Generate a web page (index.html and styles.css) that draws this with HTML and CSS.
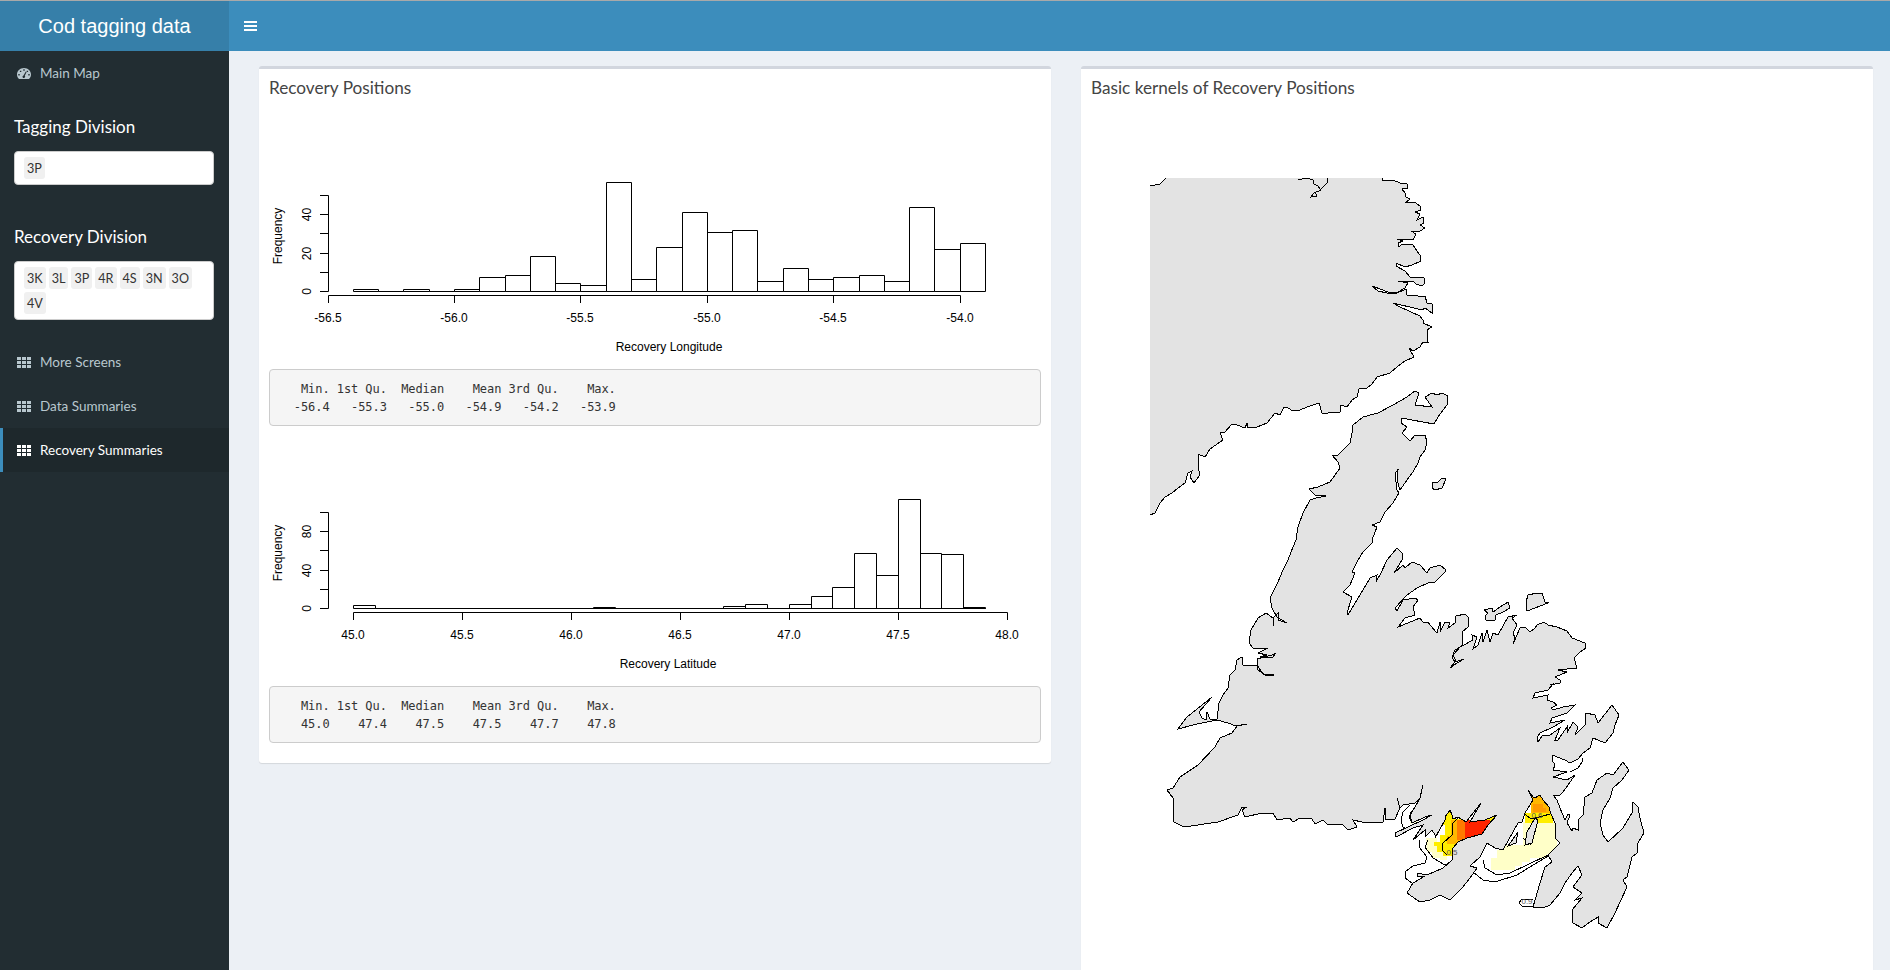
FILE: index.html
```html
<!DOCTYPE html>
<html lang="en">
<head>
    <meta charset="UTF-8">
    <title>Cod tagging data</title>
    <link rel="stylesheet" href="styles.css">
</head>
<body>

<header class="topbar">
    <div class="logo">Cod tagging data</div>
    <div class="navbar">
        <span class="toggle"><i></i><i></i><i></i></span>
    </div>
</header>

<div class="wrapper">
    <aside class="sidebar">
        <a class="menu-item">
            <svg class="icon" viewBox="0 0 14 11"><path fill-rule="evenodd" d="M2 11C.7 9.800 0 8.200 0 6.500 0 2.900 3.100 0 7 0s7 2.900 7 6.500c0 1.700-.7 3.300-2 4.500zM6.300 1.300v1.500h1.400V1.300zM2.900 2.700v1.400h1.400V2.700zM9.700 2.700v1.400h1.400V2.700zM1.300 6v1.400h1.400V6zM11.300 6v1.400h1.400V6zM8.800 3.600 6.500 7.400a1.300 1.300 0 1 0 1.300.4l1.800-3.900z"/></svg>
            <span>Main Map</span>
        </a>

        <div class="form-group">
            <label>Tagging Division</label>
            <div class="selectize">
                <span class="chip">3P</span>
            </div>
        </div>

        <div class="form-group">
            <label>Recovery Division</label>
            <div class="selectize">
                <span class="chip">3K</span>
                <span class="chip">3L</span>
                <span class="chip">3P</span>
                <span class="chip">4R</span>
                <span class="chip">4S</span>
                <span class="chip">3N</span>
                <span class="chip">3O</span>
                <span class="chip">4V</span>
            </div>
        </div>

        <a class="menu-item">
            <svg class="icon" viewBox="0 0 14 11"><path d="M0 0h4v3H0zM5 0h4v3H5zM10 0h4v3h-4zM0 4h4v3H0zM5 4h4v3H5zM10 4h4v3h-4zM0 8h4v3H0zM5 8h4v3H5zM10 8h4v3h-4z"/></svg>
            <span>More Screens</span>
        </a>
        <a class="menu-item">
            <svg class="icon" viewBox="0 0 14 11"><path d="M0 0h4v3H0zM5 0h4v3H5zM10 0h4v3h-4zM0 4h4v3H0zM5 4h4v3H5zM10 4h4v3h-4zM0 8h4v3H0zM5 8h4v3H5zM10 8h4v3h-4z"/></svg>
            <span>Data Summaries</span>
        </a>
        <a class="menu-item active">
            <svg class="icon" viewBox="0 0 14 11"><path d="M0 0h4v3H0zM5 0h4v3H5zM10 0h4v3h-4zM0 4h4v3H0zM5 4h4v3H5zM10 4h4v3h-4zM0 8h4v3H0zM5 8h4v3H5zM10 8h4v3h-4z"/></svg>
            <span>Recovery Summaries</span>
        </a>
    </aside>

    <main class="content">
        <section class="box box-short">
            <h3 class="box-title">Recovery Positions</h3>
            <div class="box-body">
                <svg class="plot" viewBox="269 119 772 250">
                    <path class="bars" d="M353.500 291.500V289.500H378.500V291.500ZM378.500 291.500H403.500ZM403.500 291.500V289.500H429.500V291.500ZM429.500 291.500H454.500ZM454.500 291.500V289.500H479.500V291.500ZM479.500 291.500V277.500H505.500V291.500ZM505.500 291.500V275.500H530.500V291.500ZM530.500 291.500V256.500H555.500V291.500ZM555.500 291.500V283.500H580.500V291.500ZM580.500 291.500V285.500H606.500V291.500ZM606.500 291.500V182.500H631.500V291.500ZM631.500 291.500V279.500H656.500V291.500ZM656.500 291.500V247.500H682.500V291.500ZM682.500 291.500V212.500H707.500V291.500ZM707.500 291.500V232.500H732.500V291.500ZM732.500 291.500V230.500H757.500V291.500ZM757.500 291.500V281.500H783.500V291.500ZM783.500 291.500V268.500H808.500V291.500ZM808.500 291.500V279.500H833.500V291.500ZM833.500 291.500V277.500H859.500V291.500ZM859.500 291.500V275.500H884.500V291.500ZM884.500 291.500V281.500H909.500V291.500ZM909.500 291.500V207.500H934.500V291.500ZM934.500 291.500V249.500H960.500V291.500ZM960.500 291.500V243.500H985.500V291.500Z"/>
                    <path class="axis" d="M328.500 195.500V291.500M320 195.500H328.500M320 214.500H328.500M320 233.500H328.500M320 253.500H328.500M320 272.500H328.500M320 291.500H328.500M328.500 295.500H960.500M328.500 295.500V303M454.500 295.500V303M580.500 295.500V303M707.500 295.500V303M833.500 295.500V303M960.500 295.500V303"/>
                    <text class="tick" x="328" y="322">-56.5</text>
                    <text class="tick" x="454" y="322">-56.0</text>
                    <text class="tick" x="580" y="322">-55.5</text>
                    <text class="tick" x="707" y="322">-55.0</text>
                    <text class="tick" x="833" y="322">-54.5</text>
                    <text class="tick" x="960" y="322">-54.0</text>
                    <text class="tick" transform="translate(311 291.500) rotate(-90)">0</text>
                    <text class="tick" transform="translate(311 253.500) rotate(-90)">20</text>
                    <text class="tick" transform="translate(311 214.500) rotate(-90)">40</text>
                    <text class="tick" transform="translate(282 236) rotate(-90)">Frequency</text>
                    <text class="tick" x="669" y="351">Recovery Longitude</text>
                </svg>
                <pre class="summary">   Min. 1st Qu.  Median    Mean 3rd Qu.    Max. 
  -56.4   -55.3   -55.0   -54.9   -54.2   -53.9 </pre>

                <svg class="plot" viewBox="269 436 772 250">
                    <path class="bars" d="M353.500 608.500V605.500H375.500V608.500ZM375.500 608.500H985.500ZM593.500 608.500V607.500H615.500V608.500ZM723.500 608.500V606.500H745.500V608.500ZM745.500 608.500V604.500H767.500V608.500ZM789.500 608.500V604.500H811.500V608.500ZM811.500 608.500V596.500H832.500V608.500ZM832.500 608.500V587.500H854.500V608.500ZM854.500 608.500V553.500H876.500V608.500ZM876.500 608.500V575.500H898.500V608.500ZM898.500 608.500V499.500H920.500V608.500ZM920.500 608.500V553.500H941.500V608.500ZM941.500 608.500V554.500H963.500V608.500ZM963.500 608.500V607.500H985.500V608.500Z"/>
                    <path class="axis" d="M328.500 512.500V608.500M320 512.500H328.500M320 531.500H328.500M320 550.500H328.500M320 570.500H328.500M320 589.500H328.500M320 608.500H328.500M353.500 612.500H1007.500M353.500 612.500V620M462.500 612.500V620M571.500 612.500V620M680.500 612.500V620M789.500 612.500V620M898.500 612.500V620M1007.500 612.500V620"/>
                    <text class="tick" x="353" y="639">45.0</text>
                    <text class="tick" x="462" y="639">45.5</text>
                    <text class="tick" x="571" y="639">46.0</text>
                    <text class="tick" x="680" y="639">46.5</text>
                    <text class="tick" x="789" y="639">47.0</text>
                    <text class="tick" x="898" y="639">47.5</text>
                    <text class="tick" x="1007" y="639">48.0</text>
                    <text class="tick" transform="translate(311 608.500) rotate(-90)">0</text>
                    <text class="tick" transform="translate(311 570.500) rotate(-90)">40</text>
                    <text class="tick" transform="translate(311 531.500) rotate(-90)">80</text>
                    <text class="tick" transform="translate(282 553) rotate(-90)">Frequency</text>
                    <text class="tick" x="668" y="668">Recovery Latitude</text>
                </svg>
                <pre class="summary">   Min. 1st Qu.  Median    Mean 3rd Qu.    Max. 
   45.0    47.4    47.5    47.5    47.7    47.8 </pre>
            </div>
        </section>

        <section class="box">
            <h3 class="box-title">Basic kernels of Recovery Positions</h3>
            <div class="box-body map-plot">
                <svg class="map" viewBox="1150 178 520 772">
                    <!-- kernel density, land is painted over it -->
                    <path class="k1" d="M1491 870H1515V866H1522V862H1530V858H1547V854H1557V822H1523V845H1503V850H1497V858H1491Z"/>
                    <path class="k1" d="M1426 838H1437V842H1447V860H1440V858H1432V852H1427Z"/>
                    <path class="k1" d="M1412 812L1416 808 1414 818 1418 822 1410 824Z"/>
                    <path class="k2" d="M1525 813H1553V823H1525Z"/>
                    <path class="k2" d="M1442 812H1453V819H1465V833L1458 842 1455 856H1443V852H1437V846H1434V842H1440V835H1445V825H1442Z"/>
                    <path class="k2" d="M1484 820L1500 812V822H1484Z"/>
                    <path class="k3" d="M1531 796H1548V800H1551V813H1531Z"/>
                    <path class="k4" d="M1533 804H1543V808H1546V812H1533Z"/>
                    <path class="k3" d="M1451 820H1460V844H1447V836H1451Z"/>
                    <path class="k5" d="M1457 820H1467V840H1457Z"/>
                    <path class="k6" d="M1465 820H1490V826H1486V840H1465Z"/>
                    <path class="contour" d="M1420 840L1419 847 1427 857 1425 863 1413 866 1405 872 1405 878 1412 883M1428 840L1425 847 1433 858 1445 865 1452 862M1458 818L1453 823 1452 835 1443 843 1442 850 1447 855M1410 805L1403 812 1401 820 1403 827 1410 830M1417 806L1411 812 1409 818 1413 823M1473 872L1483 880 1495 882 1517 875 1533 865 1550 855M1483 860L1485 868 1497 875 1510 873 1527 865 1548 855M1523 813L1530 818 1535 818 1543 816 1550 814M1533 907L1522 906 1519 903 1522 899 1533 900M1523 838L1531 845"/>

                    <path class="land" d="M1140 187L1150 186 1160 184 1166 178V170H1382V178L1382 180 1388 181 1393 180 1400 183 1407 184 1408 188 1402 189 1405 193 1406 197 1410 199 1405 203 1410 202 1416 203 1420 206 1421 210 1415 212 1420 214 1417 220 1423 217 1424 223 1420 225 1425 228 1420 231 1411 231 1416 234 1413 240 1397 239 1403 241 1398 243 1398 247 1403 244 1413 245 1417 251 1420 255 1421 261 1412 265 1405 267 1396 263 1396 266 1405 271 1410 277 1424 278 1425 283 1422 286 1416 284 1413 281 1398 281 1408 283 1405 288 1398 292 1390 293 1383 290 1372 286 1378 291 1387 293 1397 293 1406 289 1407 295 1418 296 1425 296 1427 303 1432 304 1432 313 1425 308 1422 310 1393 303 1400 307 1420 316 1423 320 1423 323 1432 327 1427 330 1428 342 1423 342 1420 347 1413 351 1409 348 1414 357 1405 361 1397 367 1390 373 1377 377 1372 384 1367 388 1359 389 1357 397 1352 400 1347 407 1341 405 1340 412 1328 413 1322 413 1319 403 1307 407 1300 410 1293 411 1288 408 1284 407 1280 415 1275 413 1267 423 1257 427 1248 428 1247 423 1245 428 1237 425 1232 424 1225 432 1220 433 1223 440 1210 449 1205 457 1198 454 1198 467 1200 475 1194 483 1190 477 1192 471 1188 473 1185 483 1178 488 1172 493 1165 497 1160 503 1155 513 1150 515 1140 515Z"/>
                    <path class="coast" d="M1298 180L1302 179 1307 178 1313 180 1314 184 1318 186 1321 190 1314 193 1311 197 1317 196 1315 192M1327 178L1327 183 1321 189"/>

                    <path class="land" d="M1415 391L1407 397 1393 405 1378 413 1363 417 1353 425 1352 433 1350 443 1343 450 1338 455 1332 455 1338 462 1340 468 1330 482 1318 487 1309 489 1315 495 1326 496 1316 498 1310 500 1303 513 1298 527 1296 540 1293 547 1288 560 1283 570 1278 582 1270 598 1272 608 1277 617 1287 623 1278 620 1278 613 1273 618 1274 626 1273 618 1266 613 1258 618 1251 630 1249 643 1253 648 1268 648 1258 653 1267 655 1260 657 1272 658 1276 653 1272 655 1257 659 1258 670 1267 676 1274 675 1263 674 1257 665 1243 665 1242 657 1237 660 1235 670 1230 675 1228 688 1223 695 1219 703 1217 719 1210 719 1207 712 1206 720 1202 718 1199 712 1212 697 1202 705 1187 717 1178 729 1197 724 1217 720 1228 723 1236 726 1247 724 1237 726 1232 733 1220 738 1215 747 1198 765 1180 777 1173 788 1167 790 1173 798 1174 822 1184 827 1218 822 1238 815 1242 807 1247 807 1242 810 1245 817 1262 813 1273 813 1277 820 1290 818 1293 822 1300 818 1312 819 1315 824 1323 820 1327 824 1343 825 1348 830 1357 827 1353 820 1362 822 1383 822 1385 808 1386 820 1395 819 1400 808 1397 798 1400 808 1403 805 1415 803 1420 798 1423 785 1420 798 1415 807 1410 815 1412 823 1425 817 1432 815 1423 820 1395 833 1396 837 1413 828 1423 825 1413 840 1425 830 1425 837 1432 830 1435 835 1435 838 1445 820 1445 817 1450 810 1452 815 1453 819 1458 817 1466 822 1481 803 1470 822 1485 820 1497 815 1488 825 1482 834 1467 838 1458 842 1453 848 1452 860 1443 868 1427 875 1417 873 1417 877 1425 876 1413 883 1407 893 1420 902 1430 900 1440 895 1450 900 1462 888 1470 878 1477 868 1470 866 1480 857 1487 843 1495 848 1503 850 1518 823 1522 822 1525 813 1533 800 1528 790 1533 797 1535 798 1540 795 1543 800 1549 807 1551 814 1555 823 1555 838 1560 843 1555 848 1548 855 1552 862 1545 867 1540 883 1533 907 1543 908 1550 905 1560 893 1565 883 1572 873 1578 866 1582 875 1573 887 1582 893 1575 900 1582 898 1572 910 1573 923 1582 928 1590 922 1598 917 1598 923 1607 928 1615 913 1627 887 1623 880 1627 877 1632 857 1637 853 1638 843 1644 833 1640 818 1638 807 1633 802 1632 813 1623 828 1608 842 1603 835 1600 823 1603 810 1610 798 1613 788 1622 780 1629 770 1623 762 1613 775 1607 773 1597 780 1592 793 1585 797 1583 815 1578 820 1578 830 1573 828 1572 831 1567 823 1570 815 1568 814 1565 820 1560 808 1557 800 1553 795 1560 795 1563 792 1568 785 1575 775 1567 780 1553 777 1567 772 1553 770 1555 765 1552 760 1552 755 1565 760 1570 763 1578 759 1583 753 1590 748 1593 738 1605 743 1613 733 1615 725 1619 715 1612 705 1598 723 1595 715 1586 713 1585 725 1575 735 1578 727 1573 722 1567 733 1567 727 1558 740 1555 740 1560 728 1550 735 1542 736 1538 742 1537 738 1540 733 1553 727 1565 720 1550 723 1552 718 1567 713 1575 705 1563 707 1553 710 1551 708 1557 705 1553 702 1547 700 1548 695 1533 698 1535 693 1548 690 1553 684 1550 685 1560 683 1560 680 1555 677 1567 672 1558 670 1577 668 1574 658 1580 652 1586 648 1585 643 1572 638 1567 631 1557 627 1548 625 1544 622 1537 625 1535 628 1530 632 1525 627 1520 628 1513 644 1515 638 1513 633 1517 625 1512 618 1517 615 1508 617 1498 635 1493 633 1490 642 1487 630 1483 642 1482 633 1478 645 1473 649 1477 637 1472 635 1473 640 1462 646 1455 650 1452 657 1455 662 1464 659 1457 663 1450 668 1456 661 1453 655 1462 645 1462 632 1468 627 1468 617 1465 614 1456 616 1455 623 1448 628 1450 622 1445 622 1440 632 1440 622 1437 633 1430 625 1428 622 1423 622 1420 618 1398 627 1405 618 1415 615 1413 607 1418 600 1415 598 1403 600 1397 611 1395 608 1407 595 1417 588 1430 582 1435 582 1445 572 1446 570 1440 565 1430 568 1427 573 1420 565 1412 562 1405 568 1403 565 1394 573 1402 560 1402 553 1397 548 1387 560 1381 573 1376 582 1377 575 1370 578 1360 595 1348 615 1347 613 1352 597 1343 592 1350 585 1355 573 1352 572 1357 562 1363 552 1372 543 1372 540 1377 527 1372 525 1380 522 1385 512 1393 503 1399 493 1397 490 1395 473 1399 469 1397 470 1397 480 1400 490 1407 480 1413 472 1418 463 1420 457 1425 450 1427 442 1425 435 1415 435 1410 441 1402 433 1407 427 1401 423 1402 418 1412 420 1423 422 1434 424 1438 417 1443 410 1447 405 1448 396 1442 393 1437 395 1432 393 1425 397 1432 407 1415 405 1419 393Z"/>
                    <path class="coast" d="M1582 758L1582 762 1578 768 1570 772"/>

                    <path class="land" d="M1484 610L1492 608 1493 612 1500 607 1508 602 1510 608 1503 612 1496 615 1495 620 1486 620 1485 616 1488 613Z"/>
                    <path class="land" d="M1526 602L1528 595 1537 593 1542 593 1545 602 1548 602 1548 603 1527 611Z"/>
                    <path class="land" d="M1432 482L1438 482 1442 478 1446 479 1442 488 1435 490 1432 488Z"/>
                    <path class="land" d="M1525 845L1532 843 1538 820 1535 818 1527 832Z"/>
                    <path class="land" d="M1508 846L1518 832 1516 843Z"/>

                    <text class="contour-label" x="1452" y="855">0.5</text>
                    <text class="contour-label" x="1537" y="818">0.6</text>
                    <text class="contour-label" x="1527" y="904">0.9</text>
                </svg>
            </div>
        </section>
    </main>
</div>

</body>
</html>
```

FILE: styles.css
```css
* {
    box-sizing: border-box;
}
html, body {
    height: 100%;
}
body {
    margin: 0;
    overflow: hidden;
    border-top: 1px solid #a9a9a9;
    background-color: #ecf0f5;
    font-family: Lato, "Noto Sans", sans-serif;
    font-size: 14px;
    color: #333;
}
.topbar {
    display: flex;
    height: 50px;
}
.logo {
    width: 229px;
    background-color: #367fa9;
    color: #fff;
    font-family: "Liberation Sans", sans-serif;
    font-size: 20px;
    line-height: 50px;
    text-align: center;
}
.navbar {
    flex: 1;
    display: flex;
    align-items: center;
    padding-left: 15px;
    background-color: #3c8dbc;
}
.toggle {
    display: flex;
    flex-direction: column;
    gap: 2px;
    width: 13px;
}
.toggle i {
    display: block;
    height: 2px;
    background-color: #fff;
}
.wrapper {
    display: flex;
    height: 919px;
}
.sidebar {
    flex: none;
    width: 229px;
    background-color: #222d32;
}
.menu-item {
    display: flex;
    align-items: center;
    gap: 9px;
    height: 44px;
    padding-left: 17px;
    color: #b8c7ce;
    font-size: 13.500px;
}
.menu-item .icon {
    width: 14px;
    height: 11px;
    fill: currentColor;
}
.menu-item.active {
    padding-left: 14px;
    border-left: 3px solid #3c8dbc;
    background-color: #1e282c;
    color: #fff;
}
.form-group {
    padding: 22px 15px 20px 14px;
}
.form-group label {
    display: block;
    margin-bottom: 14px;
    color: #fff;
    font-size: 17px;
    line-height: 20px;
}
.selectize {
    display: flex;
    flex-wrap: wrap;
    gap: 3px;
    padding: 5px 9px;
    border: 1px solid #ccc;
    border-radius: 4px;
    background-color: #fff;
}
.chip {
    padding: 1px 3px 0;
    border-radius: 3px;
    background-color: #f0f0f0;
    font-size: 12.600px;
    line-height: 21px;
}
.content {
    flex: 1;
    display: grid;
    grid-template-columns: 1fr 1fr;
    gap: 30px;
    align-items: start;
    padding: 15px 17px 0 30px;
}
.box {
    border-top: 3px solid #d2d6de;
    border-radius: 3px;
    background-color: #fff;
    box-shadow: 0 1px 1px rgba(0, 0, 0, 0.1);
}
.box-title {
    margin: 0;
    padding: 9px 10px 11px;
    color: #444;
    font-size: 17.200px;
    font-weight: 400;
    line-height: 20px;
}
.box-body {
    padding: 10px;
}
.plot {
    display: block;
    width: 772px;
    height: 250px;
}
.bars {
    fill: #fff;
    stroke: #000;
}
.axis {
    fill: none;
    stroke: #000;
}
.tick {
    font-family: "Liberation Sans", sans-serif;
    font-size: 12px;
    text-anchor: middle;
    fill: #000;
}
.summary {
    margin: 0 0 10px;
    padding: 9.500px;
    border: 1px solid #ccc;
    border-radius: 4px;
    background-color: #f5f5f5;
    color: #333;
    font-family: "DejaVu Sans Mono", monospace;
    font-size: 12px;
    letter-spacing: -0.07px;
    line-height: 18px;
}
.map-plot {
    height: 900px;
    padding: 69px 0 0 69px;
}
.map {
    display: block;
    width: 520px;
    height: 772px;
}
.land {
    fill: #e3e3e3;
    stroke: #000;
    shape-rendering: crispEdges;
}
.coast, .contour {
    fill: none;
    stroke: #000;
    shape-rendering: crispEdges;
}
.k1 { fill: #ffffc8; }
.k2 { fill: #ffee00; }
.k3 { fill: #ffb800; }
.k4 { fill: #ff9a00; }
.k5 { fill: #ff7a00; }
.k6 { fill: #ff2400; }
.contour-label {
    font-family: "Liberation Sans", sans-serif;
    font-size: 8px;
    text-anchor: middle;
    fill: #555;
}
```
